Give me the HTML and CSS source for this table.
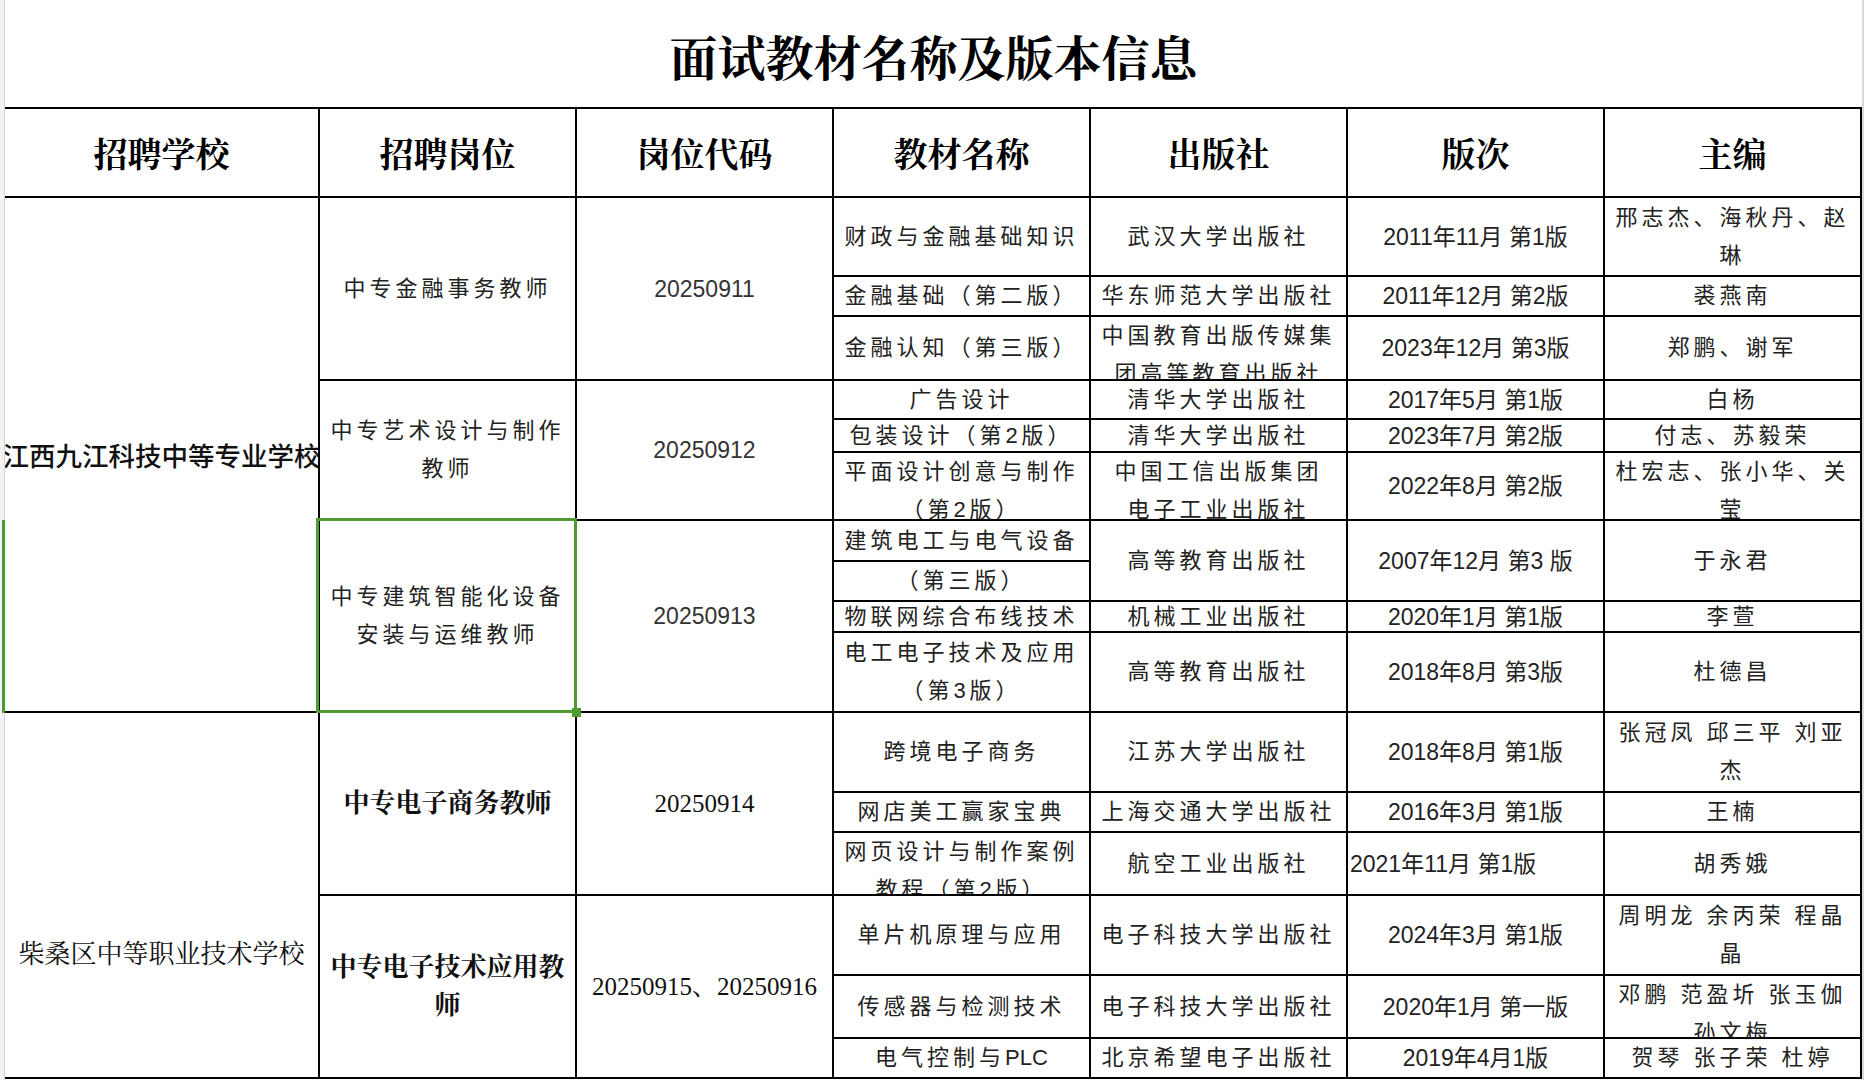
FILE: index.html
```html
<!DOCTYPE html>
<html lang="zh-CN">
<head>
<meta charset="utf-8">
<title>面试教材名称及版本信息</title>
<link rel="stylesheet" href="styles.css">
</head>
<body>
<div class="sheet">
  <div class="edge-left"></div>
  <div class="content">
    <h1 class="title">面试教材名称及版本信息</h1>
    <div class="grid">
      <div class="cell head">招聘学校</div>
      <div class="cell head">招聘岗位</div>
      <div class="cell head">岗位代码</div>
      <div class="cell head">教材名称</div>
      <div class="cell head">出版社</div>
      <div class="cell head">版次</div>
      <div class="cell head">主编</div>

      <div class="cell school rs10">江西九江科技中等专业学校</div>
      <div class="cell t rs3">中专金融事务教师</div>
      <div class="cell code rs3">20250911</div>
      <div class="cell t">财政与金融基础知识</div>
      <div class="cell t">武汉大学出版社</div>
      <div class="cell ed">2011年11月 第1版</div>
      <div class="cell t ov">邢志杰、海秋丹、赵琳</div>

      <div class="cell t">金融基础（第二版）</div>
      <div class="cell t">华东师范大学出版社</div>
      <div class="cell ed">2011年12月 第2版</div>
      <div class="cell t">裘燕南</div>

      <div class="cell t">金融认知（第三版）</div>
      <div class="cell t ov">中国教育出版传媒集团高等教育出版社</div>
      <div class="cell ed">2023年12月 第3版</div>
      <div class="cell t">郑鹏、谢军</div>

      <div class="cell t rs3">中专艺术设计与制作教师</div>
      <div class="cell code rs3">20250912</div>
      <div class="cell t">广告设计</div>
      <div class="cell t">清华大学出版社</div>
      <div class="cell ed">2017年5月 第1版</div>
      <div class="cell t">白杨</div>

      <div class="cell t">包装设计（第2版）</div>
      <div class="cell t">清华大学出版社</div>
      <div class="cell ed">2023年7月 第2版</div>
      <div class="cell t">付志、苏毅荣</div>

      <div class="cell t ov">平面设计创意与制作（第2版）</div>
      <div class="cell t ov">中国工信出版集团<br>电子工业出版社</div>
      <div class="cell ed">2022年8月 第2版</div>
      <div class="cell t ov">杜宏志、张小华、关莹</div>

      <div class="cell t rs4 sel">中专建筑智能化设备安装与运维教师</div>
      <div class="cell code rs4">20250913</div>
      <div class="cell t">建筑电工与电气设备</div>
      <div class="cell t rs2">高等教育出版社</div>
      <div class="cell ed rs2">2007年12月 第3 版</div>
      <div class="cell t rs2">于永君</div>

      <div class="cell t">（第三版）</div>

      <div class="cell t">物联网综合布线技术</div>
      <div class="cell t">机械工业出版社</div>
      <div class="cell ed">2020年1月 第1版</div>
      <div class="cell t">李萱</div>

      <div class="cell t">电工电子技术及应用（第3版）</div>
      <div class="cell t">高等教育出版社</div>
      <div class="cell ed">2018年8月 第3版</div>
      <div class="cell t">杜德昌</div>

      <div class="cell serif school2 rs6">柴桑区中等职业技术学校</div>
      <div class="cell serif bold rs3">中专电子商务教师</div>
      <div class="cell serif num rs3">20250914</div>
      <div class="cell t">跨境电子商务</div>
      <div class="cell t">江苏大学出版社</div>
      <div class="cell ed">2018年8月 第1版</div>
      <div class="cell t">张冠凤 邱三平 刘亚杰</div>

      <div class="cell t">网店美工赢家宝典</div>
      <div class="cell t">上海交通大学出版社</div>
      <div class="cell ed">2016年3月 第1版</div>
      <div class="cell t">王楠</div>

      <div class="cell t ov">网页设计与制作案例教程（第2版）</div>
      <div class="cell t">航空工业出版社</div>
      <div class="cell ed left">2021年11月 第1版</div>
      <div class="cell t">胡秀娥</div>

      <div class="cell serif bold rs3">中专电子技术应用教师</div>
      <div class="cell serif num rs3">20250915、20250916</div>
      <div class="cell t">单片机原理与应用</div>
      <div class="cell t">电子科技大学出版社</div>
      <div class="cell ed">2024年3月 第1版</div>
      <div class="cell t">周明龙 余丙荣 程晶晶</div>

      <div class="cell t">传感器与检测技术</div>
      <div class="cell t">电子科技大学出版社</div>
      <div class="cell ed">2020年1月 第一版</div>
      <div class="cell t ov">邓鹏 范盈圻 张玉伽孙文梅</div>

      <div class="cell t">电气控制与<span class="latin">PLC</span></div>
      <div class="cell t">北京希望电子出版社</div>
      <div class="cell ed">2019年4月1版</div>
      <div class="cell t">贺琴 张子荣 杜婷</div>
    </div>
  </div>
  <div class="edge-right"></div>
  <div class="row-mark"></div>
</div>
</body>
</html>
```

FILE: styles.css
```css
html, body {
  margin: 0;
  padding: 0;
  background: #ffffff;
}

body {
  font-family: "Liberation Sans", "Noto Sans CJK SC", sans-serif;
  color: #222;
}

.sheet {
  position: relative;
  display: flex;
  width: 1864px;
  height: 1080px;
  overflow: hidden;
  background: #fff;
}

.edge-left {
  flex: 0 0 5px;
  box-sizing: border-box;
  background: #f3f3f3;
  border-right: 1px solid #d2d2d2;
}

.edge-right {
  flex: 0 0 2px;
  background: #d8d8d8;
}

.content {
  flex: 0 0 1857px;
  display: flex;
  flex-direction: column;
}

.title {
  margin: 0;
  height: 107px;
  box-sizing: border-box;
  padding-top: 4px;
  display: flex;
  align-items: center;
  justify-content: center;
  font-family: "Noto Serif CJK SC", "Noto Sans CJK SC", serif;
  font-size: 48px;
  font-weight: 700;
  color: #000;
}

.grid {
  display: grid;
  grid-template-columns: 315px repeat(6, 257px);
  grid-template-rows: 89px 79px 40px 64px 39px 33px 68px 41px 40px 31px 80px 80px 40px 63px 80px 63px 40px;
  border-top: 2px solid #000;
}

.cell {
  box-sizing: border-box;
  border-right: 2px solid #000;
  border-bottom: 2px solid #000;
  display: flex;
  align-items: center;
  justify-content: center;
  text-align: center;
  overflow: hidden;
  padding: 0 5px;
  line-height: 38px;
  min-width: 0;
  min-height: 0;
}

.cell.ov {
  align-items: safe center;
}

.rs2 { grid-row: span 2; }
.rs3 { grid-row: span 3; }
.rs4 { grid-row: span 4; }
.rs6 { grid-row: span 6; }
.rs10 { grid-row: span 10; }

.head {
  font-family: "Noto Serif CJK SC", "Noto Sans CJK SC", serif;
  font-size: 34px;
  font-weight: 700;
  color: #000;
}

.t {
  font-family: "Liberation Sans", "Noto Sans CJK SC", sans-serif;
  font-size: 22px;
  letter-spacing: 4px;
  color: #222;
}

.latin {
  letter-spacing: 0;
}

.code {
  font-family: "Liberation Sans", sans-serif;
  font-size: 23px;
  color: #333;
}

.ed {
  font-family: "Liberation Sans", "Noto Sans CJK SC", sans-serif;
  font-size: 23px;
  color: #222;
  white-space: nowrap;
}

.ed.left {
  justify-content: flex-start;
  text-align: left;
  padding-left: 2px;
}

.school {
  font-family: "Noto Sans CJK SC", sans-serif;
  font-size: 26.5px;
  font-weight: 500;
  color: #111;
  white-space: nowrap;
  padding: 0;
}

.serif {
  font-family: "Liberation Serif", "Noto Serif CJK SC", "Noto Sans CJK SC", serif;
  color: #111;
}

.school2 {
  font-size: 26px;
  padding-top: 120px;
}

.bold {
  font-size: 26px;
  font-weight: 700;
}

.num {
  font-size: 25px;
}

.sel {
  position: relative;
  overflow: visible;
  z-index: 2;
}

.sel::before {
  content: "";
  position: absolute;
  left: -4px;
  top: -3px;
  right: -2px;
  bottom: -2px;
  border: 3px solid #4f9a32;
}

.sel::after {
  content: "";
  position: absolute;
  right: -6px;
  bottom: -6px;
  width: 9px;
  height: 9px;
  background: #4f9a32;
}

.row-mark {
  position: absolute;
  left: 2px;
  top: 520px;
  width: 3px;
  height: 193px;
  background: #4f9a32;
}
```
